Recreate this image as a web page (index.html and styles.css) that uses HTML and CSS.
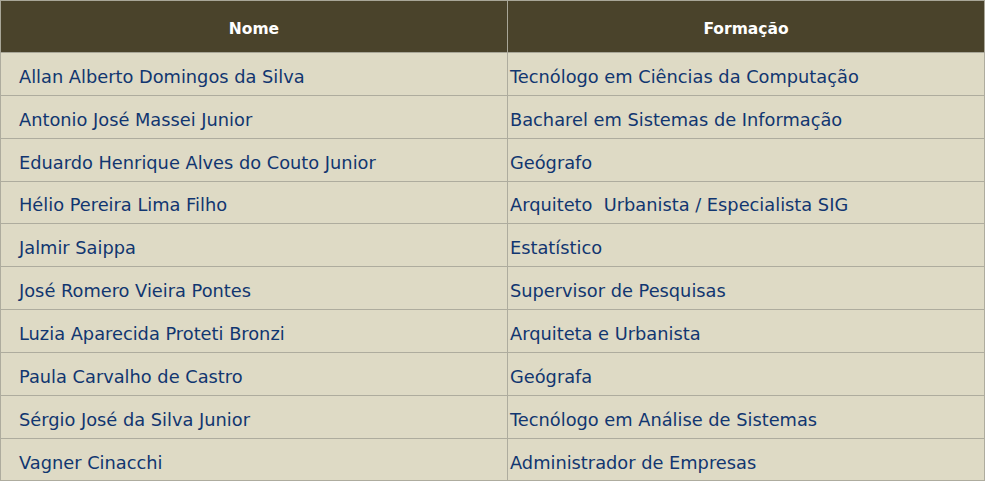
FILE: index.html
```html
<!DOCTYPE html>
<html lang="pt">
<head>
  <meta charset="UTF-8" />
  <title>Equipe</title>
  <link rel="stylesheet" href="styles.css">
</head>
<body>
  <table class="equipe">
    <thead>
      <tr>
        <th class="col-nome">Nome</th>
        <th class="col-formacao">Formação</th>
      </tr>
    </thead>
    <tbody>
      <tr><td class="nome">Allan Alberto Domingos da Silva</td><td class="formacao">Tecnólogo em Ciências da Computação</td></tr>
      <tr><td class="nome">Antonio José Massei Junior</td><td class="formacao">Bacharel em Sistemas de Informação</td></tr>
      <tr><td class="nome">Eduardo Henrique Alves do Couto Junior</td><td class="formacao">Geógrafo</td></tr>
      <tr><td class="nome">Hélio Pereira Lima Filho</td><td class="formacao">Arquiteto&nbsp; Urbanista / Especialista SIG</td></tr>
      <tr><td class="nome">Jalmir Saippa</td><td class="formacao">Estatístico</td></tr>
      <tr><td class="nome">José Romero Vieira Pontes</td><td class="formacao">Supervisor de Pesquisas</td></tr>
      <tr><td class="nome">Luzia Aparecida Proteti Bronzi</td><td class="formacao">Arquiteta e Urbanista</td></tr>
      <tr><td class="nome">Paula Carvalho de Castro</td><td class="formacao">Geógrafa</td></tr>
      <tr><td class="nome">Sérgio José da Silva Junior</td><td class="formacao">Tecnólogo em Análise de Sistemas</td></tr>
      <tr><td class="nome">Vagner Cinacchi</td><td class="formacao">Administrador de Empresas</td></tr>
    </tbody>
  </table>
</body>
</html>
```

FILE: styles.css
```css
body {
  margin: 0;
  padding: 0;
  background: #ffffff;
  font-family: "DejaVu Sans", Verdana, sans-serif;
}

.equipe {
  width: 985px;
  border-collapse: collapse;
  border: 1px solid #a8a698;
  background: #dedac5;
}

.equipe th {
  height: 52px;
  background: #4a432b;
  color: #ffffff;
  font-size: 15.5px;
  font-weight: bold;
  text-align: center;
  border: 1px solid #a8a698;
  padding: 4px 0 0 0;
  box-sizing: border-box;
}

.col-nome {
  width: 507px;
}

.equipe td {
  height: 42.85px;
  font-size: 17.8px;
  color: #113670;
  border: 1px solid #aeac9e;
  padding: 5px 0 0 0;
  box-sizing: border-box;
  vertical-align: middle;
}

.nome {
  padding-left: 18px !important;
}

.formacao {
  padding-left: 2px !important;
}
```
